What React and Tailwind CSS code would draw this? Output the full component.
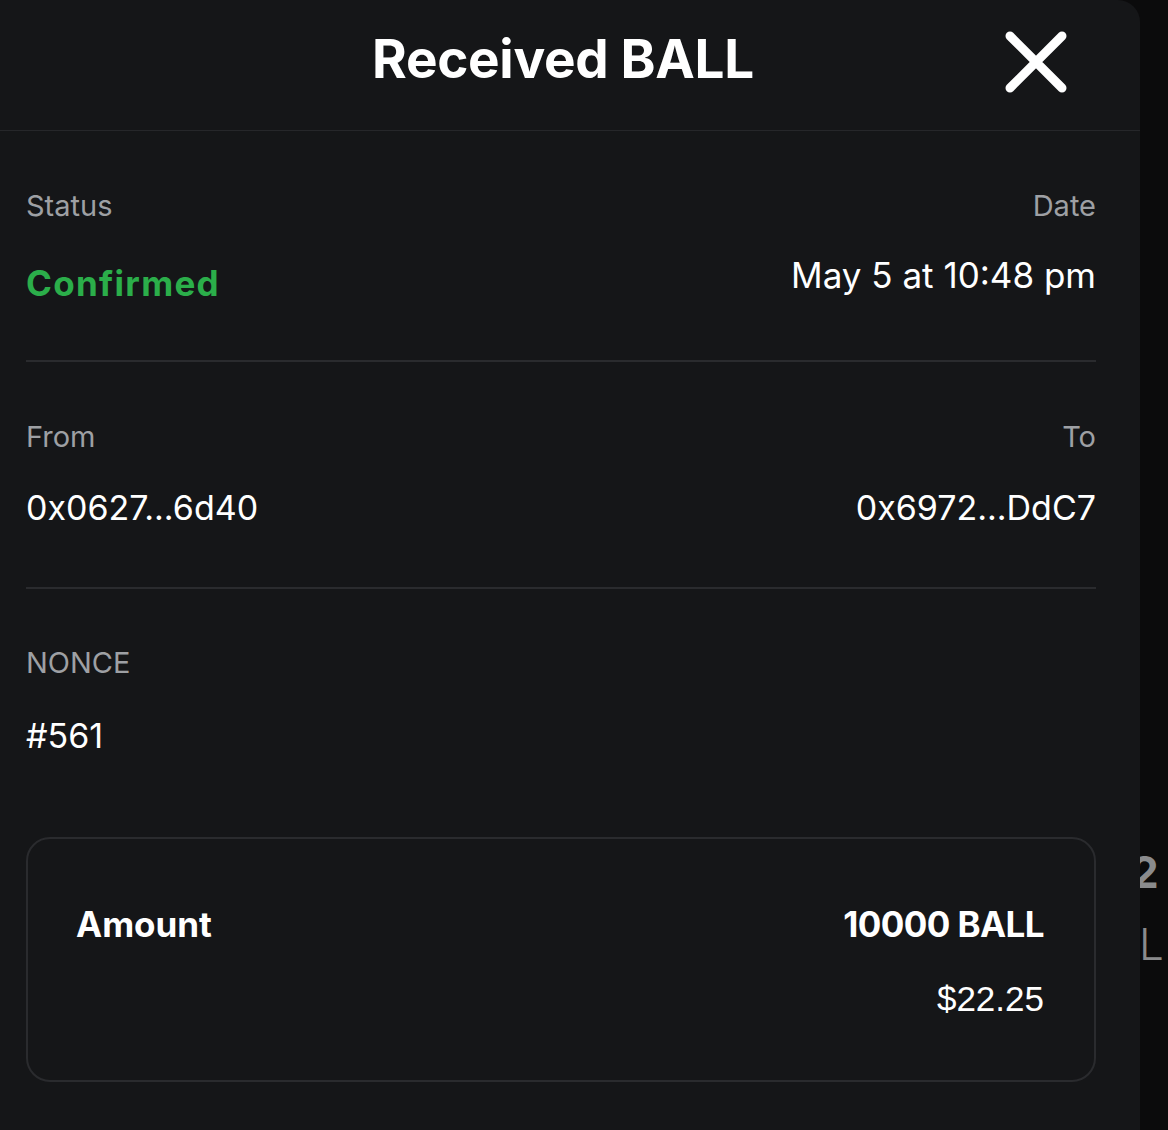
import React from "react";

const font = { fontFamily: "Inter, 'Noto Sans', sans-serif" };

export default function App() {
  return (
    <div className="w-[1168px] h-[1130px] flex bg-[#0b0b0c] overflow-hidden" style={font}>
      <div className="w-[1140px] h-full bg-[#151618] rounded-tr-[22px] flex flex-col shrink-0">
        <div className="h-[131px] border-b border-[#26272a] relative flex items-center justify-center">
          <h1 className="text-[53px] font-bold text-white tracking-[-0.3px] pb-[10px] pr-[14px]">Received BALL</h1>
          <div className="absolute left-[1002px] top-[28px] w-[68px] h-[68px]">
            <svg viewBox="0 0 68 68" width="68" height="68">
              <path d="M8 8 L60 60 M60 8 L8 60" stroke="white" strokeWidth="9" strokeLinecap="round" />
            </svg>
          </div>
        </div>
        <div className="pl-[26px] pr-[44px] flex flex-col">
          <div className="pt-[53px] pb-[63px] border-b-2 border-[#2a2b2e]">
            <div className="flex justify-between text-[29px] text-[#9ea0a4]">
              <span>Status</span>
              <span>Date</span>
            </div>
            <div className="flex justify-between items-start mt-[27px] h-[42px]">
              <span className="text-[35px] font-bold text-[#2bae4a] tracking-[1.3px] mt-[2px]">Confirmed</span>
              <span className="text-[35px] text-white -mt-[6px]">May 5 at 10:48 pm</span>
            </div>
          </div>
          <div className="pt-[53px] pb-[54px] border-b-2 border-[#2a2b2e]">
            <div className="flex justify-between text-[29px] text-[#9ea0a4]">
              <span>From</span>
              <span>To</span>
            </div>
            <div className="flex justify-between mt-[24px] text-[34px] text-white">
              <span>0x0627...6d40</span>
              <span>0x6972...DdC7</span>
            </div>
          </div>
          <div className="pt-[52px]">
            <div className="text-[29px] text-[#9ea0a4]">NONCE</div>
            <div className="mt-[25px] text-[34px] text-white">#561</div>
          </div>
          <div className="mt-[76px] border-2 border-[#2a2b2e] rounded-[24px] h-[245px] pl-[48px] pt-[59px] pr-[50px]">
            <div className="flex justify-between text-[35px] font-bold text-white">
              <span>Amount</span>
              <span className="tracking-[-0.6px]">10000 BALL</span>
            </div>
            <div className="flex justify-end mt-[23px] text-[35px] text-white" style={{ fontFamily: "'Liberation Sans', Arial, sans-serif" }}>
              $22.25
            </div>
          </div>
        </div>
      </div>
      <div className="flex-1 overflow-hidden flex flex-col text-[#8a8b8d] text-[44px] font-bold pt-[850px]">
        <span className="-ml-[9px] leading-none">2</span>
        <span className="-ml-[1px] leading-none mt-[28px] font-light">L</span>
      </div>
    </div>
  );
}
